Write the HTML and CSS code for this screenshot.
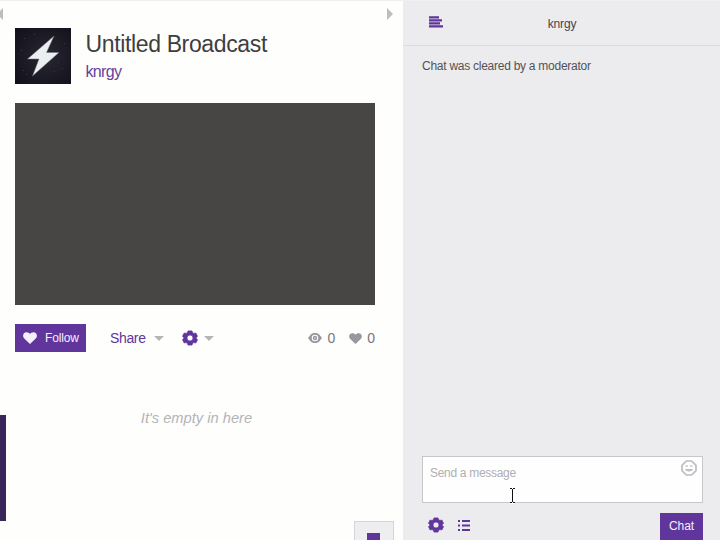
FILE: index.html
```
<!DOCTYPE html>
<html lang="en">
<head>
<meta charset="utf-8">
<title>knrgy</title>
<link rel="stylesheet" href="styles.css">
</head>
<body>
<div class="app">
  <main class="channel">
    <span class="collapse collapse-left"></span>
    <span class="collapse collapse-right"></span>
    <header class="heading">
      <svg class="avatar" viewBox="0 0 56 56">
        <defs><radialGradient id="night" cx=".55" cy=".5" r=".7"><stop offset="0" stop-color="#292732"/><stop offset="1" stop-color="#12111b"/></radialGradient></defs>
        <path fill="url(#night)" d="M0 0h56v56H0z"/>
        <path fill="#3c3946" d="M9 10h1v1H9zM19 6h1v1h-1zM6 22h1v1H6zM8 42h1v1H8zM11 46h1v1h-1zM39 43h1v1h-1zM47 40h1v1h-1zM49 15h1v1h-1zM43 34h1v1h-1z"/>
        <path fill="#eceff2" stroke="#6d737c" stroke-width=".5" d="M39 8 12.500 31H24l-6.500 17L44 24.500H31.500z"/>
      </svg>
      <div class="titles">
        <h1>Untitled Broadcast</h1>
        <a class="owner">knrgy</a>
      </div>
    </header>
    <div class="player"></div>
    <div class="actions">
      <button class="follow">
        <svg width="14" height="12" viewBox="0 0 14 12"><path fill="currentColor" d="M7 12 1 6.300C-1 4 .4.300 3.500.300 5.200.300 6.300 1 7 2 7.700 1 8.800.300 10.500.300 13.600.300 15 4 13 6.300z"/></svg>
        <span>Follow</span>
      </button>
      <span class="share">Share</span>
      <span class="caret"></span>
      <svg class="gear" width="16" height="16" viewBox="0 0 16 16"><path fill="currentColor" stroke="currentColor" stroke-width=".7" stroke-linejoin="round" fill-rule="evenodd" d="M6 .9h4l.7 1.800 1.200.7 2-.3 1.600 3.200-1.300 1.400v.6l1.300 1.400-1.600 3.200-2-.3-1.200.7-.7 1.800H6l-.7-1.800-1.200-.7-2 .3L.500 9.700l1.300-1.400v-.6L.500 6.300l1.600-3.200 2 .3 1.200-.7zM8 5a3 3 0 1 0 0 6 3 3 0 0 0 0-6z"/></svg>
      <span class="caret caret-gear"></span>
      <div class="stats">
        <svg width="14" height="10" viewBox="0 0 14 10"><path fill="currentColor" fill-rule="evenodd" d="M0 5 3 1.200 5.500 0h3L11 1.200 14 5l-3 3.800L8.500 10h-3L3 8.800zM7 1.700a3.300 3.300 0 1 0 0 6.600 3.300 3.300 0 0 0 0-6.600z"/><circle cx="7" cy="5" r="2.200" fill="currentColor"/><circle cx="7" cy="5" r=".7" fill="#fff"/></svg>
        <span>0</span>
        <svg class="likes" width="13" height="11" viewBox="0 0 14 12"><path fill="currentColor" d="M7 12 1 6.300C-1 4 .4.300 3.500.300 5.200.300 6.300 1 7 2 7.700 1 8.800.300 10.500.300 13.600.300 15 4 13 6.300z"/></svg>
        <span>0</span>
      </div>
    </div>
    <p class="empty">It's empty in here</p>
    <span class="side-tab"></span>
    <span class="dock"><i></i></span>
  </main>
  <aside class="chat">
    <header class="chat-head">
      <svg width="14" height="12" viewBox="0 0 14 12"><path fill="currentColor" d="M0 .300h10v2.200H0zM0 3.300h13v2.200H0zM0 6.300h11v2.200H0zM0 9.300h14v2.200H0z"/></svg>
      <span>knrgy</span>
    </header>
    <div class="log">Chat was cleared by a moderator</div>
    <div class="compose">
      <span class="hint">Send a message</span>
      <svg class="smile" width="16" height="16" viewBox="0 0 16 16"><path fill="none" stroke="currentColor" stroke-width="1.700" d="M5.300 1h5.400L15 5.300v5.400L10.700 15H5.300L1 10.700V5.300z"/><path fill="currentColor" d="M4.700 5.200h2v1.600h-2zM9.300 5.200h2v1.600h-2zM4 9h8c0 3.300-8 3.300-8 0z"/></svg>
      <svg class="cursor" width="7" height="17" viewBox="0 0 7 17"><path fill="none" stroke="#fff" stroke-width="3" d="M1 1.500h5M3.500 1.500v14M1 15.500h5"/><path fill="#111" d="M1 1h2v1H1zM4 1h2v1H4zM3 2h1v13H3zM1 15h2v1H1zM4 15h2v1H4z"/></svg>
    </div>
    <footer class="tools">
      <svg class="gear" width="16" height="16" viewBox="0 0 16 16"><path fill="currentColor" stroke="currentColor" stroke-width=".7" stroke-linejoin="round" fill-rule="evenodd" d="M6 .9h4l.7 1.800 1.200.7 2-.3 1.600 3.200-1.300 1.400v.6l1.300 1.400-1.600 3.200-2-.3-1.200.7-.7 1.800H6l-.7-1.800-1.200-.7-2 .3L.500 9.700l1.300-1.400v-.6L.500 6.300l1.600-3.200 2 .3 1.200-.7zM8 5a3 3 0 1 0 0 6 3 3 0 0 0 0-6z"/></svg>
      <svg class="list" width="12" height="11" viewBox="0 0 12 11"><path fill="currentColor" d="M0 0h2v2H0zM4 0h8v2H4zM0 4.500h2v2H0zM4 4.500h8v2H4zM0 9h2v2H0zM4 9h8v2H4z"/></svg>
      <button class="send">Chat</button>
    </footer>
  </aside>
</div>
</body>
</html>
```
FILE: styles.css
```
* { box-sizing: border-box; }
body { margin: 0; font-family: "Liberation Sans", Arial, sans-serif; color: #404044; }
svg { display: block; flex: none; }
button { border: 0; padding: 0; font: inherit; color: #f5effc; background: #60359c; }
.app { display: flex; width: 720px; height: 540px; overflow: hidden; background: #fefefd; border-top: 1px solid #f1f0f1; }
.channel { position: relative; flex: none; width: 403px; padding: 27px 28px 0 15px; }
.collapse { position: absolute; top: 7px; border: 6px solid transparent; }
.collapse-left { left: -9px; border-right-color: #bdbdbd; }
.collapse-right { left: 387px; border-right-width: 0; border-left-color: #bdbdbd; }
.heading { display: flex; height: 75px; }
.avatar { width: 56px; height: 56px; }
.titles { margin-left: 15px; white-space: nowrap; }
h1 { margin: 2px 0 0 -.5px; font-size: 23px; line-height: 28px; font-weight: 400; letter-spacing: -.36px; color: #3e3e40; }
.owner { display: block; margin: 4px 0 0 -.5px; font-size: 16px; line-height: 20px; letter-spacing: -.65px; color: #65419e; }
.player { width: 360px; height: 202px; background: #474644; }
.actions { display: flex; align-items: center; width: 360px; height: 28px; margin-top: 19px; color: #60359c; }
.follow { display: flex; align-items: center; gap: 8px; width: 71px; height: 28px; padding-left: 8px; font-size: 12px; letter-spacing: -.15px; }
.share { width: 36px; margin-left: 24px; font-size: 14px; letter-spacing: -.35px; }
.caret { width: 10px; margin-left: 8px; border: 5px solid transparent; border-bottom: 0; border-top-color: #b5b4b6; }
.actions .gear { margin-left: 18px; }
.caret-gear { margin-left: 6px; }
.stats { display: flex; align-items: center; margin-left: auto; font-size: 14px; color: #98969e; }
.stats span { margin-left: 5px; color: #77767b; }
.stats .likes { margin-left: 14px; }
.empty { margin: 56px 0 0; padding-left: 1px; width: 362px; text-align: center; font-size: 14.7px; line-height: 20px; font-style: italic; color: #b4b4b6; white-space: nowrap; }
.side-tab { position: absolute; left: 0; top: 414px; width: 6px; height: 106px; background: #38265b; }
.dock { position: absolute; left: 354px; top: 520px; width: 40px; height: 24px; border: 1px solid #d5d4d6; background: #eeedf0; }
.dock i { display: block; width: 13px; height: 12px; margin: 11px 0 0 12px; background: #60359c; }
.chat { display: flex; flex-direction: column; width: 317px; background: #ecebee; }
.chat-head { display: flex; align-items: flex-start; height: 45px; padding: 15px 0 0 26px; border-bottom: 1px solid #dcdbd8; color: #60359c; }
.chat-head span { width: 60px; margin: 1px 0 0 89px; text-align: center; font-size: 12px; line-height: 14px; letter-spacing: -.15px; color: #464649; }
.log { flex: 1; padding: 13px 19px; font-size: 12px; line-height: 15px; letter-spacing: -.26px; color: #535356; }
.compose { position: relative; width: 281px; height: 47px; margin-left: 19px; padding: 9px 7px; border: 1px solid #c7c6ca; background: #fefefe; font-size: 12px; line-height: 15px; color: #b0afb2; }
.hint { display: block; letter-spacing: -.3px; }
.smile { position: absolute; right: 5px; top: 3px; color: #bdbcc0; }
.cursor { position: absolute; left: 86px; top: 30px; }
.tools { display: flex; align-items: flex-start; height: 37px; padding: 10px 17px 0 25px; color: #60359c; }
.tools .gear { margin-top: 4px; }
.tools .list { margin: 7px 0 0 14px; }
.send { width: 43px; height: 27px; margin-left: auto; padding-bottom: 2px; font-size: 12px; letter-spacing: -.1px; }
```
